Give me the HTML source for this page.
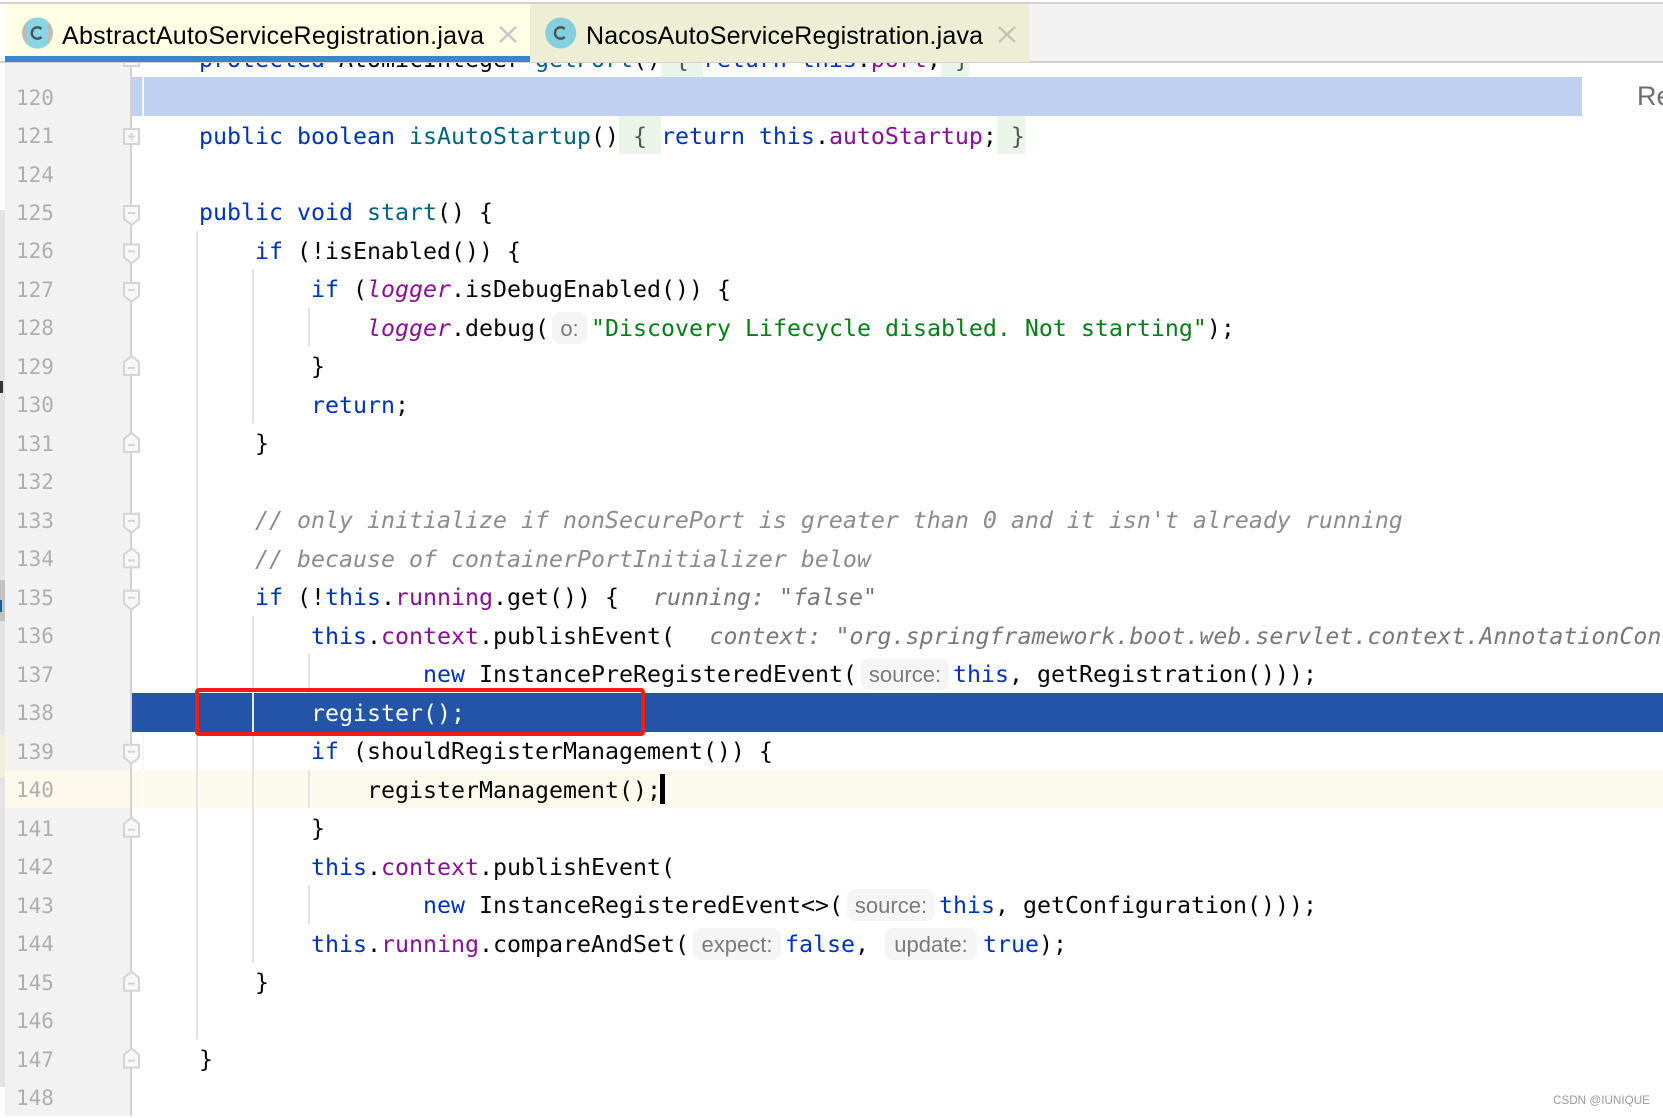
<!DOCTYPE html>
<html>
<head>
<meta charset="utf-8">
<title>AbstractAutoServiceRegistration.java</title>
<style>
html,body{margin:0;padding:0;width:1663px;height:1116px;overflow:hidden;background:#fff}
.a{position:absolute}
.l{position:absolute;white-space:pre;height:38.5px;line-height:38.5px;margin:2px 0 0 -1px;font-family:"DejaVu Sans Mono","Liberation Mono",monospace;font-size:23.25px;color:#080808;font-variant-ligatures:none}
.n{position:absolute;left:16px;height:38.5px;line-height:38.5px;margin-top:1.5px;font-family:"DejaVu Sans Mono","Liberation Mono",monospace;font-size:21px;color:#aeaeae}
.k{color:#0033b3}.m{color:#00627a}.f{color:#871094}.fi{color:#871094;font-style:italic}
.s{color:#067d17}.c{color:#8c8c8c;font-style:italic}.h{color:#787878;font-style:italic}.g{color:#555}
.b{position:absolute;height:32px;background:#f5f5f5;border-radius:8px;font-family:"Liberation Sans",sans-serif;font-size:22px;line-height:34px;color:#7a7a7a;text-align:center}
.v{position:absolute;width:2px;background:#e3e3e3}
.fb{position:absolute;height:38.5px;background:#e9f5e6}
</style>
</head>
<body>
<!-- left strip -->
<div class="a" style="left:0;top:210px;width:5px;height:877px;background:#e4e4e4"></div>
<div class="a" style="left:0;top:580px;width:5px;height:41px;background:#c2c2c2"></div>
<div class="a" style="left:0;top:735px;width:5px;height:42px;background:#f0efdc"></div>
<div class="a" style="left:0;top:381px;width:3px;height:12px;background:#333"></div>
<div class="a" style="left:0;top:600px;width:2px;height:12px;background:#1c5f8f"></div>

<!-- gutter -->
<div class="a" style="left:5px;top:62px;width:125px;height:1054px;background:#f2f2f2"></div>
<div class="a" style="left:5px;top:769.6px;width:125px;height:38.5px;background:#fcf9ec"></div>
<div class="a" style="left:130px;top:62px;width:2px;height:1054px;background:#d2d2d2"></div>

<!-- row backgrounds -->
<div class="a" style="left:132px;top:77px;width:1450px;height:39px;background:#c0d0f0"></div>
<div class="a" style="left:142px;top:77px;width:2px;height:39px;background:#f4f7fd"></div>
<div class="a" style="left:132px;top:692.7px;width:1531px;height:39px;background:#2354a5"></div>
<div class="a" style="left:132px;top:769.6px;width:1531px;height:38.5px;background:#fcfaed"></div>
<div class="a" style="left:143px;top:731.5px;width:1px;height:38px;background:#f3f3f3"></div>
<div class="a" style="left:142px;top:769.6px;width:2px;height:38.5px;background:#fff"></div>

<!-- indent guides -->
<div class="v" style="left:196px;top:231px;height:808px"></div>
<div class="v" style="left:252px;top:269.4px;height:154px"></div>
<div class="v" style="left:252px;top:615.7px;height:347px"></div>
<div class="v" style="left:252px;top:692.7px;height:39px;background:#e8edf5"></div>
<div class="v" style="left:308px;top:307.9px;height:38.5px"></div>
<div class="v" style="left:308px;top:654.2px;height:38.5px"></div>
<div class="v" style="left:308px;top:769.6px;height:38.5px"></div>
<div class="v" style="left:308px;top:885.1px;height:38.5px"></div>

<!-- folded brace backgrounds -->
<div class="fb" style="left:661px;width:42px;top:38.5px"></div>
<div class="fb" style="left:941px;width:28px;top:38.5px"></div>
<div class="fb" style="left:619px;width:42px;top:115.5px"></div>
<div class="fb" style="left:997px;width:28px;top:115.5px"></div>

<!-- line numbers -->
<div class="n" style="top:77px">120</div>
<div class="n" style="top:115.5px">121</div>
<div class="n" style="top:154px">124</div>
<div class="n" style="top:192.4px">125</div>
<div class="n" style="top:230.9px">126</div>
<div class="n" style="top:269.4px">127</div>
<div class="n" style="top:307.9px">128</div>
<div class="n" style="top:346.4px">129</div>
<div class="n" style="top:384.8px">130</div>
<div class="n" style="top:423.3px">131</div>
<div class="n" style="top:461.8px">132</div>
<div class="n" style="top:500.3px">133</div>
<div class="n" style="top:538.8px">134</div>
<div class="n" style="top:577.2px">135</div>
<div class="n" style="top:615.7px">136</div>
<div class="n" style="top:654.2px">137</div>
<div class="n" style="top:692.7px">138</div>
<div class="n" style="top:731.2px">139</div>
<div class="n" style="top:769.6px">140</div>
<div class="n" style="top:808.1px">141</div>
<div class="n" style="top:846.6px">142</div>
<div class="n" style="top:885.1px">143</div>
<div class="n" style="top:923.6px">144</div>
<div class="n" style="top:962px">145</div>
<div class="n" style="top:1000.5px">146</div>
<div class="n" style="top:1039px">147</div>
<div class="n" style="top:1077.5px">148</div>

<!-- fold icons -->
<svg class="a" style="left:0;top:0" width="200" height="1116" viewBox="0 0 200 1116">
<defs>
<g id="dn"><path d="M1 1H16V14L8.5 20L1 14Z" fill="#f7f7f7" stroke="#d4d4d4" stroke-width="2"/><path d="M5 8H12" stroke="#d4d4d4" stroke-width="2"/></g>
<g id="up"><path d="M1 20H16V7L8.5 1L1 7Z" fill="#f7f7f7" stroke="#d4d4d4" stroke-width="2"/><path d="M5 13H12" stroke="#d4d4d4" stroke-width="2"/></g>
<g id="pl"><path d="M1 1H16V16H1Z" fill="#f7f7f7" stroke="#d4d4d4" stroke-width="2"/><path d="M5 8.5H12M8.5 5V12" stroke="#d4d4d4" stroke-width="2"/></g>
</defs>
<use href="#pl" x="123" y="50"/>
<use href="#pl" x="123" y="128"/>
<use href="#dn" x="123" y="205"/>
<use href="#dn" x="123" y="243.4"/>
<use href="#dn" x="123" y="281.9"/>
<use href="#up" x="123" y="355"/>
<use href="#up" x="123" y="431.9"/>
<use href="#dn" x="123" y="512.8"/>
<use href="#up" x="123" y="547.4"/>
<use href="#dn" x="123" y="589.7"/>
<use href="#dn" x="123" y="743.7"/>
<use href="#up" x="123" y="816.7"/>
<use href="#up" x="123" y="970.6"/>
<use href="#up" x="123" y="1047.6"/>
</svg>

<!-- code -->
<div class="l" style="left:200px;top:38.5px"><span class="k">protected</span> AtomicInteger <span class="m">getPort</span>()<span class="g"> { </span><span class="k">return this</span>.<span class="f">port</span>;<span class="g"> }</span></div>
<div class="l" style="left:200px;top:115.5px"><span class="k">public boolean</span> <span class="m">isAutoStartup</span>()<span class="g"> { </span><span class="k">return this</span>.<span class="f">autoStartup</span>;<span class="g"> }</span></div>
<div class="l" style="left:200px;top:192.4px"><span class="k">public void</span> <span class="m">start</span>() {</div>
<div class="l" style="left:256px;top:230.9px"><span class="k">if</span> (!isEnabled()) {</div>
<div class="l" style="left:312px;top:269.4px"><span class="k">if</span> (<span class="fi">logger</span>.isDebugEnabled()) {</div>
<div class="l" style="left:368px;top:307.9px"><span class="fi">logger</span>.debug(</div>
<div class="b" style="left:552px;width:35px;top:311.9px">o:</div>
<div class="l" style="left:592px;top:307.9px"><span class="s">"Discovery Lifecycle disabled. Not starting"</span>);</div>
<div class="l" style="left:312px;top:346.4px">}</div>
<div class="l" style="left:312px;top:384.8px"><span class="k">return</span>;</div>
<div class="l" style="left:256px;top:423.3px">}</div>
<div class="l c" style="left:256px;top:500.3px">// only initialize if nonSecurePort is greater than 0 and it isn't already running</div>
<div class="l c" style="left:256px;top:538.8px">// because of containerPortInitializer below</div>
<div class="l" style="left:256px;top:577.2px"><span class="k">if</span> (!<span class="k">this</span>.<span class="f">running</span>.get()) {</div>
<div class="l h" style="left:654px;top:577.2px">running: "false"</div>
<div class="l" style="left:312px;top:615.7px"><span class="k">this</span>.<span class="f">context</span>.publishEvent(</div>
<div class="l h" style="left:710.5px;top:615.7px">context: "org.springframework.boot.web.servlet.context.AnnotationConfig</div>
<div class="l" style="left:424px;top:654.2px"><span class="k">new</span> InstancePreRegisteredEvent(</div>
<div class="b" style="left:861px;width:88px;top:658.2px">source:</div>
<div class="l" style="left:954px;top:654.2px"><span class="k">this</span>, getRegistration()));</div>
<div class="l" style="left:312px;top:692.7px;color:#fff">register();</div>
<div class="l" style="left:312px;top:731.2px"><span class="k">if</span> (shouldRegisterManagement()) {</div>
<div class="l" style="left:368px;top:769.6px">registerManagement();</div>
<div class="a" style="left:660px;top:774px;width:5px;height:30px;background:#000"></div>
<div class="l" style="left:312px;top:808.1px">}</div>
<div class="l" style="left:312px;top:846.6px"><span class="k">this</span>.<span class="f">context</span>.publishEvent(</div>
<div class="l" style="left:424px;top:885.1px"><span class="k">new</span> InstanceRegisteredEvent&lt;&gt;(</div>
<div class="b" style="left:847px;width:88px;top:889.1px">source:</div>
<div class="l" style="left:940px;top:885.1px"><span class="k">this</span>, getConfiguration()));</div>
<div class="l" style="left:312px;top:923.6px"><span class="k">this</span>.<span class="f">running</span>.compareAndSet(</div>
<div class="b" style="left:693px;width:88px;top:927.6px">expect:</div>
<div class="l" style="left:786px;top:923.6px"><span class="k">false</span>,</div>
<div class="b" style="left:885px;width:92px;top:927.6px">update:</div>
<div class="l" style="left:984px;top:923.6px"><span class="k">true</span>);</div>
<div class="l" style="left:256px;top:962px">}</div>
<div class="l" style="left:200px;top:1039px">}</div>

<!-- red box -->
<div class="a" style="left:195px;top:688px;width:442px;height:40px;border:4px solid #f41d12;border-radius:4px"></div>

<!-- tab bar -->
<svg class="a" style="left:0;top:0" width="1663" height="63" viewBox="0 0 1663 63">
<defs><clipPath id="mid"><rect x="27" y="15" width="21" height="36"/></clipPath></defs>
<rect x="0" y="2" width="1663" height="2" fill="#d0d0d0"/>
<rect x="1029" y="4" width="634" height="57" fill="#f2f2f2"/>
<rect x="0" y="61" width="1663" height="2" fill="#d2d2d2"/>
<rect x="5" y="4" width="525" height="58" fill="#ffffe4"/>
<rect x="5" y="56" width="525" height="6" fill="#4083c9"/>
<rect x="530" y="4" width="499" height="58" fill="#eeeed5"/>
<circle cx="37.5" cy="33" r="15.5" fill="#b9bdb8"/>
<circle cx="37.5" cy="33" r="15.5" fill="#8ad4e4" clip-path="url(#mid)"/>
<path d="M41.5 29A5.7 5.7 0 1 0 41.5 37" fill="none" stroke="#45555a" stroke-width="2.4"/>
<circle cx="560.7" cy="33" r="15.5" fill="#84cfdd"/>
<path d="M564.7 29A5.7 5.7 0 1 0 564.7 37" fill="none" stroke="#45555a" stroke-width="2.4"/>
<text x="62" y="44" font-family="Liberation Sans, sans-serif" font-size="25" fill="#000" textLength="422" lengthAdjust="spacing">AbstractAutoServiceRegistration.java</text>
<text x="586" y="44" font-family="Liberation Sans, sans-serif" font-size="25" fill="#000" textLength="397" lengthAdjust="spacing">NacosAutoServiceRegistration.java</text>
<path d="M500 27L516 42M516 27L500 42" stroke="#c6c6c6" stroke-width="2.4"/>
<path d="M999 27L1015 42M1015 27L999 42" stroke="#c4c4b4" stroke-width="2.4"/>
</svg>

<!-- right side -->
<div class="a" style="left:1637px;top:80px;font:27px/32px 'Liberation Sans',sans-serif;color:#6e6e6e;white-space:pre">Re</div>
<div class="a" style="left:1553px;top:1093px;font:11.7px/15px 'Liberation Sans',sans-serif;color:#9a9a9a;white-space:pre">CSDN @IUNIQUE</div>
</body>
</html>
